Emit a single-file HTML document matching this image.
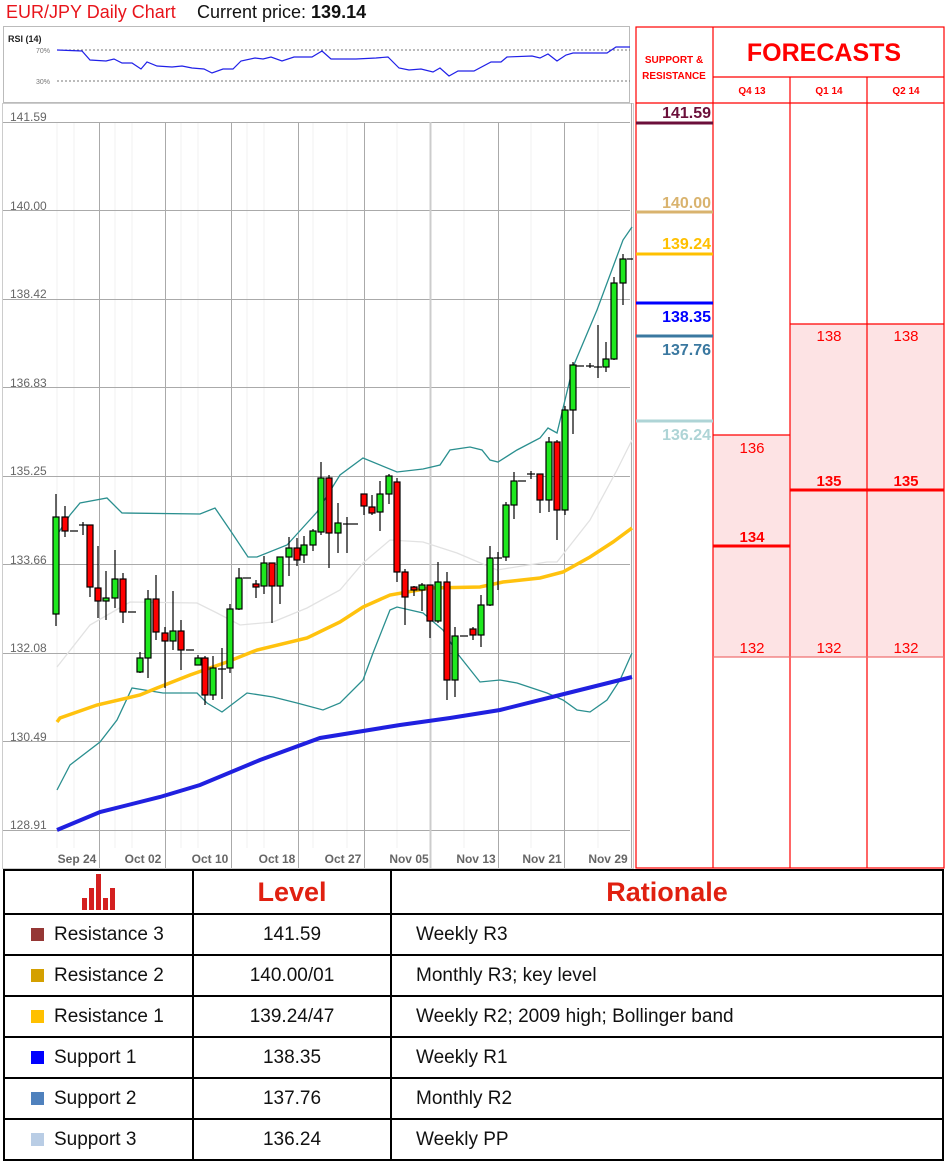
<!DOCTYPE html>
<html><head><meta charset="utf-8"><style>
body{margin:0;background:#fff;width:948px;height:1164px;overflow:hidden;position:relative;font-family:"Liberation Sans",sans-serif}
.abs{position:absolute}
table{position:absolute;left:3px;top:869px;width:941px;border-collapse:collapse;font-family:"Liberation Sans",sans-serif;font-size:19px;color:#111}
td{border:2px solid #000;height:39px;padding:0}
.h td{height:42px;color:#e02010;font-weight:bold;font-size:27px;text-align:center}
.c{text-align:center}
.sw{display:inline-block;width:13px;height:13px;margin:0 10px 0 26px;vertical-align:-1px}
</style></head><body>
<div class="abs" style="left:6px;top:2px;font-size:18px;color:#e8141b;font-family:'Liberation Sans Narrow','Liberation Sans',sans-serif">EUR/JPY Daily Chart</div>
<div class="abs" style="left:197px;top:2px;font-size:18px;color:#111">Current price: <b>139.14</b></div>
<svg class="abs" style="left:0;top:0" width="948" height="869" viewBox="0 0 948 869">
<rect x="3.5" y="26.5" width="626" height="76" fill="#fff" stroke="#bbb"/>
<text x="8" y="42" font-size="9" font-weight="bold" fill="#222">RSI (14)</text>
<text x="36" y="53" font-size="7" fill="#777">70%</text>
<text x="36" y="84" font-size="7" fill="#777">30%</text>
<line x1="57" y1="50" x2="630" y2="50" stroke="#777" stroke-dasharray="2,2"/>
<line x1="57" y1="81" x2="630" y2="81" stroke="#777" stroke-dasharray="2,2"/>
<polyline fill="none" stroke="#2020e8" stroke-width="1.2" points="57,50 82,51 90,60 106,61 114,59 122,63 132,63 141,69 147,62 157,66 172,67 182,66 192,68 204,69 212,73 223,69 233,69 241,61 255,58 263,59 271,57 282,61 294,57 312,57 322,51 331,59 356,59 376,58 388,57 399,68 409,70 421,69 433,72 440,68 449,76 458,71 474,71 491,62 501,62 507,57 532,56 540,58 548,54 557,61 566,55 573,53 607,53 616,47 630,47"/>
<rect x="2.5" y="103.5" width="631" height="765" fill="#fff" stroke="#ccc"/>
<g stroke="#f0f0f0" stroke-width="1">
<line x1="57" y1="122" x2="57" y2="848"/><line x1="74" y1="122" x2="74" y2="848"/><line x1="115" y1="122" x2="115" y2="848"/><line x1="132" y1="122" x2="132" y2="848"/><line x1="181" y1="122" x2="181" y2="848"/><line x1="198" y1="122" x2="198" y2="848"/><line x1="247" y1="122" x2="247" y2="848"/><line x1="264" y1="122" x2="264" y2="848"/><line x1="313" y1="122" x2="313" y2="848"/><line x1="347" y1="122" x2="347" y2="848"/><line x1="397" y1="122" x2="397" y2="848"/><line x1="464" y1="122" x2="464" y2="848"/><line x1="531" y1="122" x2="531" y2="848"/><line x1="598" y1="122" x2="598" y2="848"/>
</g>
<g stroke="#aaa" stroke-width="1">
<line x1="3" y1="122.5" x2="630" y2="122.5"/><line x1="3" y1="210.5" x2="630" y2="210.5"/><line x1="3" y1="299.5" x2="630" y2="299.5"/><line x1="3" y1="387.5" x2="630" y2="387.5"/><line x1="3" y1="476.5" x2="630" y2="476.5"/><line x1="3" y1="564.5" x2="630" y2="564.5"/><line x1="3" y1="653.5" x2="630" y2="653.5"/><line x1="3" y1="741.5" x2="630" y2="741.5"/><line x1="3" y1="830.5" x2="630" y2="830.5"/>
<line x1="99.5" y1="122" x2="99.5" y2="868"/><line x1="165.5" y1="122" x2="165.5" y2="868"/><line x1="231.5" y1="122" x2="231.5" y2="868"/><line x1="298.5" y1="122" x2="298.5" y2="868"/><line x1="364.5" y1="122" x2="364.5" y2="868"/><line x1="430.5" y1="122" x2="430.5" y2="868" stroke="#ccc" stroke-width="2"/><line x1="498.5" y1="122" x2="498.5" y2="868"/><line x1="564.5" y1="122" x2="564.5" y2="868"/><line x1="631.5" y1="103" x2="631.5" y2="868"/>
</g>
<g font-size="12" fill="#666">
<text x="10" y="121">141.59</text><text x="10" y="210">140.00</text><text x="10" y="298">138.42</text><text x="10" y="387">136.83</text><text x="10" y="475">135.25</text><text x="10" y="564">133.66</text><text x="10" y="652">132.08</text><text x="10" y="741">130.49</text><text x="10" y="829">128.91</text>
</g>
<g font-size="12" fill="#666" font-weight="bold" text-anchor="middle">
<text x="77" y="863">Sep 24</text><text x="143" y="863">Oct 02</text><text x="210" y="863">Oct 10</text><text x="277" y="863">Oct 18</text><text x="343" y="863">Oct 27</text><text x="409" y="863">Nov 05</text><text x="476" y="863">Nov 13</text><text x="542" y="863">Nov 21</text><text x="608" y="863">Nov 29</text>
</g>
<polyline fill="none" stroke="#e2e2e2" stroke-width="1.3" points="57,667 90,625 130,602 197,603 217,613 240,625 273,622 307,608 340,590 363,563 390,540 423,542 457,553 497,570 547,562 557,562 590,520 617,470 632,440"/>
<polyline fill="none" stroke="#2a8f8f" stroke-width="1.3" points="57,535 70,515 80,503 107,498 122,513 200,514 215,508 230,530 248,557 257,557 287,545 317,512 340,475 363,458 397,472 423,469 440,465 450,450 470,447 482,450 490,460 498,462 517,450 540,438 548,428 557,433 573,367 597,310 623,240 632,227"/>
<polyline fill="none" stroke="#2a8f8f" stroke-width="1.3" points="57,790 70,765 100,742 117,720 132,688 163,693 197,693 207,703 222,712 247,693 273,697 297,703 323,710 340,703 363,680 373,653 390,610 397,607 423,613 443,630 457,653 480,682 500,680 517,683 547,693 563,700 577,710 590,712 607,700 620,680 632,653"/>
<polyline fill="none" stroke="#ffc20e" stroke-width="3.5" points="57,722 60,718 97,705 140,695 157,688 190,675 227,662 257,650 307,638 340,622 363,607 390,595 430,588 480,587 503,582 540,578 563,572 590,557 613,542 632,528"/>
<polyline fill="none" stroke="#2020e0" stroke-width="4" points="57,830 100,812 160,797 200,785 260,760 320,738 400,725 450,718 500,710 560,695 632,677"/>
<g stroke="#000" stroke-width="1.2">
<line x1="56" y1="494" x2="56" y2="626"/><rect x="53" y="517" width="6" height="97" fill="#1ee81e"/>
<line x1="65" y1="506" x2="65" y2="537"/><rect x="62" y="517" width="6" height="14" fill="#f00"/>
<line x1="70" y1="531" x2="78" y2="531"/>
<line x1="79" y1="525" x2="87" y2="525"/><line x1="83" y1="522" x2="83" y2="535"/>
<line x1="90" y1="546" x2="90" y2="597"/><rect x="87" y="525" width="6" height="62" fill="#f00"/>
<line x1="98" y1="546" x2="98" y2="618"/><rect x="95" y="588" width="6" height="13" fill="#f00"/>
<line x1="106" y1="571" x2="106" y2="620"/><rect x="103" y="598" width="6" height="3" fill="#1ee81e"/>
<line x1="115" y1="550" x2="115" y2="608"/><rect x="112" y="579" width="6" height="19" fill="#1ee81e"/>
<line x1="123" y1="573" x2="123" y2="623"/><rect x="120" y="579" width="6" height="33" fill="#f00"/>
<line x1="128" y1="612" x2="136" y2="612"/>
<line x1="140" y1="652" x2="140" y2="673"/><rect x="137" y="658" width="6" height="14" fill="#1ee81e"/>
<line x1="148" y1="590" x2="148" y2="678"/><rect x="145" y="599" width="6" height="59" fill="#1ee81e"/>
<line x1="156" y1="575" x2="156" y2="640"/><rect x="153" y="599" width="6" height="33" fill="#f00"/>
<line x1="165" y1="627" x2="165" y2="688"/><rect x="162" y="633" width="6" height="8" fill="#f00"/>
<line x1="173" y1="591" x2="173" y2="650"/><rect x="170" y="631" width="6" height="10" fill="#1ee81e"/>
<line x1="181" y1="620" x2="181" y2="670"/><rect x="178" y="631" width="6" height="19" fill="#f00"/>
<line x1="186" y1="650" x2="194" y2="650"/>
<line x1="198" y1="655" x2="198" y2="665"/><rect x="195" y="658" width="6" height="7" fill="#1ee81e"/>
<line x1="205" y1="656" x2="205" y2="705"/><rect x="202" y="658" width="6" height="37" fill="#f00"/>
<line x1="213" y1="656" x2="213" y2="700"/><rect x="210" y="668" width="6" height="27" fill="#1ee81e"/>
<line x1="222" y1="648" x2="222" y2="699"/><line x1="218" y1="669" x2="226" y2="669"/>
<line x1="230" y1="604" x2="230" y2="673"/><rect x="227" y="609" width="6" height="59" fill="#1ee81e"/>
<line x1="239" y1="568" x2="239" y2="610"/><rect x="236" y="578" width="6" height="31" fill="#1ee81e"/>
<line x1="243" y1="578" x2="251" y2="578"/>
<line x1="256" y1="580" x2="256" y2="598"/><rect x="253" y="584" width="6" height="3" fill="#f00"/>
<line x1="264" y1="556" x2="264" y2="594"/><rect x="261" y="563" width="6" height="23" fill="#1ee81e"/>
<line x1="272" y1="563" x2="272" y2="623"/><rect x="269" y="563" width="6" height="23" fill="#f00"/>
<line x1="280" y1="557" x2="280" y2="604"/><rect x="277" y="557" width="6" height="29" fill="#1ee81e"/>
<line x1="289" y1="537" x2="289" y2="576"/><rect x="286" y="548" width="6" height="9" fill="#1ee81e"/>
<line x1="297" y1="538" x2="297" y2="566"/><rect x="294" y="548" width="6" height="12" fill="#f00"/>
<line x1="304" y1="536" x2="304" y2="563"/><rect x="301" y="545" width="6" height="10" fill="#1ee81e"/>
<line x1="313" y1="529" x2="313" y2="551"/><rect x="310" y="531" width="6" height="14" fill="#1ee81e"/>
<line x1="321" y1="462" x2="321" y2="535"/><rect x="318" y="478" width="6" height="54" fill="#1ee81e"/>
<line x1="329" y1="475" x2="329" y2="568"/><rect x="326" y="478" width="6" height="55" fill="#f00"/>
<line x1="338" y1="503" x2="338" y2="553"/><rect x="335" y="523" width="6" height="10" fill="#1ee81e"/>
<line x1="347" y1="517" x2="347" y2="553"/><line x1="343" y1="524" x2="358" y2="524"/>
<line x1="364" y1="494" x2="364" y2="515"/><rect x="361" y="494" width="6" height="12" fill="#f00"/>
<line x1="372" y1="495" x2="372" y2="515"/><rect x="369" y="507" width="6" height="6" fill="#f00"/>
<line x1="380" y1="481" x2="380" y2="531"/><rect x="377" y="494" width="6" height="18" fill="#1ee81e"/>
<line x1="389" y1="474" x2="389" y2="504"/><rect x="386" y="476" width="6" height="18" fill="#1ee81e"/>
<line x1="397" y1="478" x2="397" y2="582"/><rect x="394" y="482" width="6" height="90" fill="#f00"/>
<line x1="405" y1="569" x2="405" y2="625"/><rect x="402" y="572" width="6" height="25" fill="#f00"/>
<line x1="414" y1="586" x2="414" y2="596"/><rect x="411" y="587" width="6" height="3" fill="#f00"/>
<line x1="422" y1="583" x2="422" y2="611"/><rect x="419" y="585" width="6" height="5" fill="#1ee81e"/>
<line x1="430" y1="585" x2="430" y2="638"/><rect x="427" y="585" width="6" height="36" fill="#f00"/>
<line x1="438" y1="562" x2="438" y2="623"/><rect x="435" y="582" width="6" height="39" fill="#1ee81e"/>
<line x1="447" y1="572" x2="447" y2="700"/><rect x="444" y="582" width="6" height="98" fill="#f00"/>
<line x1="455" y1="627" x2="455" y2="697"/><rect x="452" y="636" width="6" height="44" fill="#1ee81e"/>
<line x1="460" y1="636" x2="468" y2="636"/>
<line x1="473" y1="627" x2="473" y2="640"/><rect x="470" y="629" width="6" height="6" fill="#f00"/>
<line x1="481" y1="595" x2="481" y2="647"/><rect x="478" y="605" width="6" height="30" fill="#1ee81e"/>
<line x1="490" y1="546" x2="490" y2="606"/><rect x="487" y="558" width="6" height="47" fill="#1ee81e"/>
<line x1="498" y1="552" x2="498" y2="590"/><line x1="494" y1="558" x2="502" y2="558"/>
<line x1="506" y1="502" x2="506" y2="561"/><rect x="503" y="505" width="6" height="52" fill="#1ee81e"/>
<line x1="514" y1="472" x2="514" y2="519"/><rect x="511" y="481" width="6" height="24" fill="#1ee81e"/>
<line x1="518" y1="481" x2="526" y2="481"/>
<line x1="531" y1="471" x2="531" y2="479"/><line x1="527" y1="474" x2="535" y2="474"/>
<line x1="540" y1="474" x2="540" y2="513"/><rect x="537" y="474" width="6" height="26" fill="#f00"/>
<line x1="549" y1="437" x2="549" y2="512"/><rect x="546" y="442" width="6" height="58" fill="#1ee81e"/>
<line x1="557" y1="440" x2="557" y2="540"/><rect x="554" y="442" width="6" height="68" fill="#f00"/>
<line x1="565" y1="406" x2="565" y2="515"/><rect x="562" y="410" width="6" height="100" fill="#1ee81e"/>
<line x1="573" y1="362" x2="573" y2="434"/><rect x="570" y="365" width="6" height="45" fill="#1ee81e"/>
<line x1="576" y1="366" x2="584" y2="366"/>
<line x1="590" y1="363" x2="590" y2="368"/><line x1="586" y1="366" x2="594" y2="366"/>
<line x1="598" y1="325" x2="598" y2="378"/><line x1="594" y1="367" x2="602" y2="367"/>
<line x1="606" y1="342" x2="606" y2="372"/><rect x="603" y="359" width="6" height="8" fill="#1ee81e"/>
<line x1="614" y1="277" x2="614" y2="360"/><rect x="611" y="283" width="6" height="76" fill="#1ee81e"/>
<line x1="623" y1="254" x2="623" y2="305"/><rect x="620" y="259" width="6" height="24" fill="#1ee81e"/>
<line x1="627" y1="259" x2="633" y2="259"/>
</g>
<rect x="790" y="324" width="154" height="333" fill="#fde3e4"/>
<rect x="713" y="435" width="77" height="222" fill="#fde3e4"/>
<g stroke="#f00" stroke-width="1.2" fill="none">
<rect x="636" y="27" width="308" height="841"/>
<line x1="713" y1="27" x2="713" y2="868"/>
<line x1="713" y1="77" x2="944" y2="77"/>
<line x1="636" y1="103" x2="944" y2="103"/>
<line x1="790" y1="77" x2="790" y2="868"/>
<line x1="867" y1="77" x2="867" y2="868"/>
<line x1="790" y1="324" x2="944" y2="324"/>
<line x1="713" y1="435" x2="790" y2="435"/>
<line x1="713" y1="657" x2="944" y2="657" stroke="#f07070"/>
<line x1="713" y1="546" x2="790" y2="546" stroke-width="3"/>
<line x1="790" y1="490" x2="944" y2="490" stroke-width="3"/>
</g>
<g fill="#f00" text-anchor="middle" font-weight="bold">
<text x="674" y="63" font-size="10">SUPPORT &amp;</text>
<text x="674" y="79" font-size="10">RESISTANCE</text>
<text x="824" y="61" font-size="25">FORECASTS</text>
<text x="752" y="94" font-size="10">Q4 13</text>
<text x="829" y="94" font-size="10">Q1 14</text>
<text x="906" y="94" font-size="10">Q2 14</text>
<text x="752" y="542" font-size="15">134</text>
<text x="829" y="486" font-size="15">135</text>
<text x="906" y="486" font-size="15">135</text>
</g>
<g fill="#f00" text-anchor="middle" font-size="15">
<text x="829" y="341">138</text><text x="906" y="341">138</text>
<text x="752" y="453">136</text>
<text x="752" y="653">132</text><text x="829" y="653">132</text><text x="906" y="653">132</text>
</g>
<g font-size="16" font-weight="bold" text-anchor="end">
<line x1="636" y1="123" x2="713" y2="123" stroke="#6b0f3a" stroke-width="3"/><text x="711" y="118" fill="#6b0f3a">141.59</text>
<line x1="636" y1="212" x2="713" y2="212" stroke="#d9b36e" stroke-width="3"/><text x="711" y="208" fill="#d9b36e">140.00</text>
<line x1="636" y1="254" x2="713" y2="254" stroke="#ffc000" stroke-width="3"/><text x="711" y="249" fill="#ffc000">139.24</text>
<line x1="636" y1="303" x2="713" y2="303" stroke="#0000ff" stroke-width="3"/><text x="711" y="322" fill="#0000ff">138.35</text>
<line x1="636" y1="336" x2="713" y2="336" stroke="#3a78a0" stroke-width="3"/><text x="711" y="355" fill="#3a78a0">137.76</text>
<line x1="636" y1="421" x2="713" y2="421" stroke="#aed4d6" stroke-width="3"/><text x="711" y="440" fill="#aed4d6">136.24</text>
</g>
</svg>
<table>
<tr class="h"><td style="width:187px"><svg width="36" height="36" viewBox="0 0 36 36" style="vertical-align:middle"><g fill="#d42020"><rect x="1" y="24" width="5" height="12"/><rect x="8" y="14" width="5" height="22"/><rect x="15" y="0" width="5" height="36"/><rect x="22" y="24" width="5" height="12"/><rect x="29" y="14" width="5" height="22"/></g></svg></td><td style="width:196px">Level</td><td>Rationale</td></tr>
<tr><td><span class="sw" style="background:#953735"></span>Resistance 3</td><td class="c">141.59</td><td style="padding-left:24px">Weekly R3</td></tr>
<tr><td><span class="sw" style="background:#d4a000"></span>Resistance 2</td><td class="c">140.00/01</td><td style="padding-left:24px">Monthly R3; key level</td></tr>
<tr><td><span class="sw" style="background:#ffc000"></span>Resistance 1</td><td class="c">139.24/47</td><td style="padding-left:24px">Weekly R2; 2009 high; Bollinger band</td></tr>
<tr><td><span class="sw" style="background:#0000ff"></span>Support 1</td><td class="c">138.35</td><td style="padding-left:24px">Weekly R1</td></tr>
<tr><td><span class="sw" style="background:#4f81bd"></span>Support 2</td><td class="c">137.76</td><td style="padding-left:24px">Monthly R2</td></tr>
<tr><td><span class="sw" style="background:#b9cde5"></span>Support 3</td><td class="c">136.24</td><td style="padding-left:24px">Weekly PP</td></tr>
</table>
</body></html>
